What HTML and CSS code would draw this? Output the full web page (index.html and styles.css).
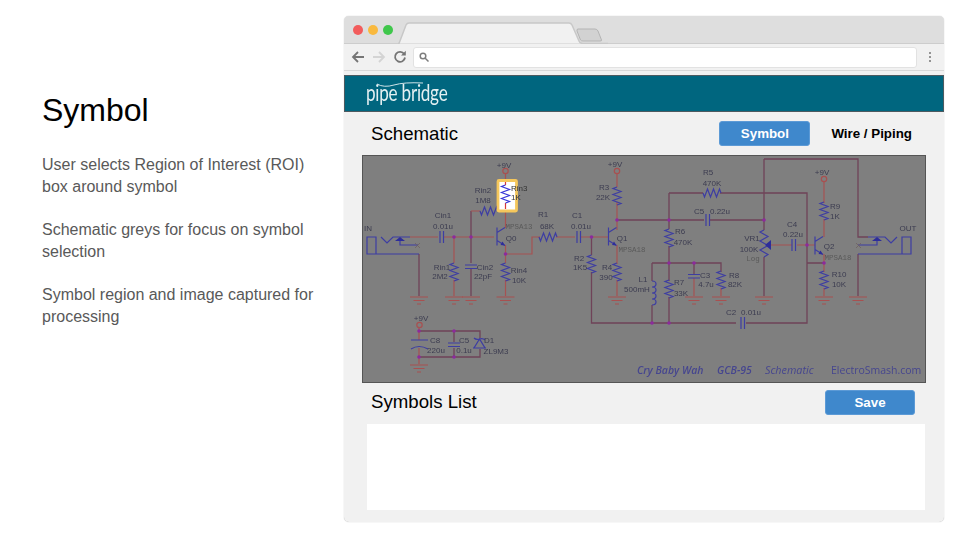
FILE: index.html
```html
<!DOCTYPE html>
<html lang="en">
<head>
<meta charset="utf-8">
<title>Symbol</title>
<link rel="stylesheet" href="styles.css">
</head>
<body>
<main class="slide">
  <section class="notes">
    <h1 class="notes-title">Symbol</h1>
    <p class="notes-text">User selects Region of Interest (ROI) box around symbol</p>
    <p class="notes-text">Schematic greys for focus on symbol selection</p>
    <p class="notes-text">Symbol region and image captured for processing</p>
  </section>

  <section class="window">
    <header class="titlebar">
      <span class="dot dot-red"></span>
      <span class="dot dot-yellow"></span>
      <span class="dot dot-green"></span>
      <svg class="tabs" viewBox="398 16 210 28" width="210" height="28">
        <path class="tab-shape" d="M398 43.5 H399 L406 25 Q407 23 409 23 H569 Q571 23 572 25 L579 41 Q580 43.5 583 43.5 H608"/>
        <path class="newtab-shape" d="M578 29 H595 Q597 29 598 31 L601.500 40 Q602 41 600 41 H583 Q581 41 580.500 40 L577 31 Q576.500 29 578 29 Z"/>
      </svg>
    </header>
    <nav class="toolbar">
      <svg class="tool-icon" viewBox="0 0 14 14" width="14" height="14"><path class="ic-dark" d="M13 7 H2 M7 2 L2 7 L7 12"/></svg>
      <svg class="tool-icon" viewBox="0 0 14 14" width="14" height="14"><path class="ic-light" d="M1 7 H12 M7 2 L12 7 L7 12"/></svg>
      <svg class="tool-icon" viewBox="0 0 14 14" width="14" height="14"><path class="ic-dark" d="M11.200 4 A5 5 0 1 0 12 7.500"/><path class="ic-fill" d="M8 5.500 H12.800 V0.800 Z"/></svg>
      <div class="address">
        <svg viewBox="0 0 10 10" width="10" height="10"><circle class="ic-search" cx="4" cy="4" r="2.800"/><path class="ic-search" d="M6 6 L9.500 9.500"/></svg>
      </div>
      <svg class="kebab" viewBox="0 0 4 12" width="4" height="12"><circle class="ic-fill" cx="2" cy="2" r="1"/><circle class="ic-fill" cx="2" cy="6" r="1"/><circle class="ic-fill" cx="2" cy="10" r="1"/></svg>
    </nav>
    <div class="brandbar">
      <div class="logo">
        <span class="logo-text">pipe bridge</span>
        <svg class="logo-swag" viewBox="0 0 48 8" width="48" height="8"><path d="M1 4 Q8 8 18 5 T47 3"/></svg>
      </div>
    </div>

    <div class="panel-head">
      <h2 class="panel-title">Schematic</h2>
      <div class="modes">
        <button class="btn btn-mode" type="button">Symbol</button>
        <span class="mode-link">Wire / Piping</span>
      </div>
    </div>

    <svg class="schematic" viewBox="362 155 564 228" width="564" height="228">
      <defs>
        <path id="rv" d="M0 0 l-4 1.500 l8 3 l-8 3 l8 3 l-8 3 l8 3 l-4 1.500"/>
        <path id="rh" d="M0 0 l1.500 4 l3 -8 l3 8 l3 -8 l3 8 l3 -8 l1.500 4"/>
        <g id="gnd">
          <path d="M-9 0 H9 M-5.500 3.500 H5.500 M-2 7 H2"/>
        </g>
        <g id="q">
          <path d="M0 -9 V9 M0 -4 L8 -9 M0 4 L8 9"/>
          <path class="solid" d="M8 9 L3.500 8.500 L5.500 5 Z"/>
        </g>
      </defs>

      <rect class="bg" x="362" y="155" width="564" height="228"/>

      <!-- dark long wires -->
      <path class="wd" d="M471 211 V263 M471 269 V296 M419 254 V296 M419 331 H480 V338 M419 357 H480 V349 M454 331 V342 M454 348 V357 M591.500 272 V323 H736 M591.500 237 V255 M652 263 H721 V272 M652 263 V281 M669 246 V281 M669 297 V323 M652 305 V323 M694 263 V274 M617 220 H704 M710 220 H764 M669 193 V229 M669 193 H703 M720 193 H807 V323 H746 M764 159 V230 M764 257 V296 M764 159 H858 V237 H868 M858 254 V296 M824 263 H807"/>
      <!-- red wires -->
      <path class="w" d="M505.500 174 V184 M505.500 205 V228 M505.500 245 V263 M505.500 280 V296 M505 254 H532 V237 H540 M556 237 H575 M581 237 H608 M410 237 H438 M444 237 H494 M454 237 V263 M454 280 V296 M471 211 H480 M617 174 V187 M617 202 V230 M617 245 V264 M617 280 V296 M694 278 V296 M721 288 V296 M824 182 V203 M824 219 V237 M824 254 V272 M824 288 V296 M419 328 V340 M419 348 V364 M771 245 H792 M797 245 H815"/>

      <!-- symbols -->
      <g class="b">
        <use href="#rv" x="505.500" y="263"/>
        <use href="#rv" x="454" y="263"/>
        <use href="#rv" x="617" y="187" />
        <use href="#rv" x="617" y="263"/>
        <use href="#rv" x="591.500" y="255"/>
        <use href="#rv" x="669" y="229"/>
        <use href="#rv" x="669" y="280"/>
        <use href="#rv" x="721" y="271"/>
        <use href="#rv" x="824" y="202"/>
        <use href="#rv" x="824" y="271"/>
        <path d="M764 230 l-4 2 l8 4.500 l-8 4.500 l8 4.500 l-8 4.500 l8 4.500 l-4 2.500"/>
        <use href="#rh" x="480" y="211"/>
        <use href="#rh" x="539" y="237"/>
        <use href="#rh" x="703" y="193"/>
        <use href="#q" x="497" y="236.500"/>
        <use href="#q" x="608.500" y="236.500"/>
        <use href="#q" x="815" y="245.500"/>
        <path d="M440 231 V243 M443.500 231 V243 M577 231 V243 M580.500 231 V243 M706 214 V226 M709.500 214 V226 M792 239 V251 M795.500 239 V251 M741 317 V329 M744.500 317 V329"/>
        <path d="M465 265 H477 M465 268.500 H477 M688 274.500 H700 M688 278 H700 M448 343 H460 M448 346.500 H460 M411 340 H428 M411 349 Q419 344 428 349"/>
        <path d="M652 281 a4 3 0 0 1 0 6 a4 3 0 0 1 0 6 a4 3 0 0 1 0 6 a4 3 0 0 1 0 6"/>
        <path d="M367 237 H376 V254 H367 Z M376 254 H419 M381 237 L387 243 L393 237 H410 M400 240 V245 H418"/>
        <path class="solid" d="M400 237 L405 241 H395 Z"/>
        <path d="M902 237 H911 V254 H902 Z M858 254 H911 M868 237 H885 L891 243 L897 237 M877 240 V245 H858"/>
        <path class="solid" d="M877 237 L882 241 H872 Z"/>
        <path class="solid" d="M771 240 V250 L765 245 Z"/>
        <path d="M473 348 H486 M479.500 339 L474 348 H485 Z M474 338 Q476 340 479.500 339 Q483 338 485 340"/>
      </g>

      <!-- grounds -->
      <g class="g">
        <use href="#gnd" x="419" y="297"/>
        <use href="#gnd" x="454" y="297"/>
        <use href="#gnd" x="471" y="297"/>
        <use href="#gnd" x="505.500" y="297"/>
        <use href="#gnd" x="617" y="297"/>
        <use href="#gnd" x="694" y="297"/>
        <use href="#gnd" x="721" y="297"/>
        <use href="#gnd" x="764" y="297"/>
        <use href="#gnd" x="824" y="297"/>
        <use href="#gnd" x="858" y="297"/>
        <use href="#gnd" x="419" y="365"/>
      </g>

      <!-- terminals -->
      <g class="term">
        <circle cx="505.500" cy="171" r="2.700"/>
        <circle cx="617" cy="171" r="2.700"/>
        <circle cx="824" cy="179" r="2.700"/>
        <circle cx="419.500" cy="325" r="2.700"/>
      </g>
      <path class="x" d="M415 243 L420 248 M420 243 L415 248 M856 243 L861 248 M861 243 L856 248"/>

      <!-- junctions -->
      <g class="n">
        <circle cx="454" cy="237" r="1.800"/><circle cx="471" cy="237" r="1.800"/>
        <circle cx="505.500" cy="254" r="1.800"/><circle cx="591.500" cy="237" r="1.800"/>
        <circle cx="617" cy="220" r="1.800"/><circle cx="669" cy="220" r="1.800"/>
        <circle cx="669" cy="263" r="1.800"/><circle cx="694" cy="263" r="1.800"/>
        <circle cx="652" cy="323" r="1.800"/><circle cx="669" cy="323" r="1.800"/>
        <circle cx="764" cy="220" r="1.800"/><circle cx="807" cy="245" r="1.800"/>
        <circle cx="824" cy="263" r="1.800"/>
        <circle cx="419" cy="331" r="1.800"/><circle cx="454" cy="331" r="1.800"/>
        <circle cx="419" cy="357" r="1.800"/><circle cx="454" cy="357" r="1.800"/>
      </g>

      <!-- labels -->
      <g class="t">
        <text x="504" y="168">+9V</text><text x="615" y="167">+9V</text><text x="822" y="175">+9V</text><text x="421" y="321">+9V</text>
        <text x="368" y="231">IN</text><text x="908" y="231">OUT</text>
        <text x="443" y="218">Cin1</text><text x="443" y="229">0.01u</text>
        <text x="483" y="193">Rin2</text><text x="483" y="203">1M8</text>
        <text x="543" y="217">R1</text><text x="547" y="229">68K</text>
        <text x="511" y="241">Q0</text>
        <text x="442" y="270">Rin1</text><text x="440" y="279">2M2</text>
        <text x="485" y="270">Cin2</text><text x="483" y="279">22pF</text>
        <text x="519" y="273">Rin4</text><text x="519" y="283">10K</text>
        <text x="435" y="343">C8</text><text x="436" y="353">220u</text>
        <text x="464" y="343">C5</text><text x="464" y="353">0.1u</text>
        <text x="489" y="343">D1</text><text x="496" y="354">ZL9M3</text>
        <text x="604" y="190">R3</text><text x="603" y="200">22K</text>
        <text x="577" y="218">C1</text><text x="581" y="229">0.01u</text>
        <text x="622" y="241">Q1</text>
        <text x="579" y="261">R2</text><text x="580" y="270">1K5</text>
        <text x="607" y="270">R4</text><text x="606" y="280">390</text>
        <text x="708" y="175">R5</text><text x="712" y="186">470K</text>
        <text x="699" y="214">C5</text><text x="720" y="214">0.22u</text>
        <text x="680" y="234">R6</text><text x="683" y="245">470K</text>
        <text x="643" y="282">L1</text><text x="637" y="292">500mH</text>
        <text x="679" y="285">R7</text><text x="681" y="296">33K</text>
        <text x="705" y="278">C3</text><text x="706" y="287">4.7u</text>
        <text x="734" y="278">R8</text><text x="735" y="287">82K</text>
        <text x="731" y="315">C2</text><text x="751" y="315">0.01u</text>
        <text x="752" y="241">VR1</text><text x="749" y="252">100K</text>
        <text x="792" y="227">C4</text><text x="793" y="237">0.22u</text>
        <text x="835" y="209">R9</text><text x="835" y="219">1K</text>
        <text x="829" y="249">Q2</text>
        <text x="839" y="277">R10</text><text x="839" y="287">10K</text>
      </g>
      <g class="tm">
        <text x="519" y="229">MPSA13</text>
        <text x="632" y="252">MPSA18</text>
        <text x="838" y="260">MPSA18</text>
        <text x="753" y="261">Log</text>
      </g>
      <g class="credit">
        <text class="credit-it" x="637" y="374">Cry Baby Wah</text>
        <text class="credit-it" x="717" y="374">GCB-95</text>
        <text class="credit-sc" x="765" y="374">Schematic</text>
        <text class="credit-url" x="831" y="374">ElectroSmash.com</text>
      </g>

      <!-- region of interest -->
      <rect class="roi" x="498" y="180.500" width="18.500" height="30.500" rx="1"/>
      <path class="roi-wire" d="M505.500 182 V185 M505.500 203 V209"/>
      <use class="roi-res" href="#rv" x="505.500" y="185"/>
      <g class="roi-t">
        <text x="511" y="191">Rin3</text>
        <text x="511" y="200">1K</text>
      </g>
    </svg>

    <div class="list-head">
      <h2 class="panel-title list-title">Symbols List</h2>
      <button class="btn btn-save" type="button">Save</button>
    </div>
    <div class="list-box"></div>
  </section>
</main>
</body>
</html>
```

FILE: styles.css
```css
* { box-sizing: border-box; }
html, body { margin: 0; padding: 0; background: #fff; }
body { font-family: "Liberation Sans", Arial, sans-serif; }

.slide { display: flex; width: 960px; height: 540px; overflow: hidden; }

.notes { width: 344px; flex: none; padding: 91px 0 0 42px; }
.notes-title { margin: 0 0 25px; font-size: 32px; line-height: 38px; font-weight: 400; color: #000; }
.notes-text { margin: 0 0 21px; width: 280px; font-size: 16px; line-height: 22px; color: #595959; }

.window { width: 600px; height: 506px; margin-top: 16px; flex: none; display: flex; flex-direction: column; background: #f1f1f1; border-radius: 5px; box-shadow: 0 0 1px #aaa; overflow: hidden; }

.titlebar { height: 28px; flex: none; display: flex; align-items: center; gap: 5px; padding-left: 9px; background: #dedede; border-bottom: 1px solid #cdcdcd; }
.dot { width: 10px; height: 10px; border-radius: 50%; }
.dot-red { background: #f25c5c; }
.dot-yellow { background: #f9b93e; }
.dot-green { background: #3fc74b; }
.tabs { align-self: flex-start; flex: none; margin-bottom: -1px; }
.tab-shape { fill: #f1f1f1; stroke: #c8c8c8; stroke-width: 1.500; }
.newtab-shape { fill: #d2d2d2; stroke: #b4b4b4; stroke-width: 1; }

.toolbar { height: 27px; flex: none; display: flex; align-items: center; gap: 7px; padding-left: 7px; border-bottom: 1px solid #d8d8d8; }
.tool-icon { flex: none; }
.ic-dark { fill: none; stroke: #757575; stroke-width: 1.800; }
.ic-light { fill: none; stroke: #d4d4d4; stroke-width: 1.800; }
.ic-fill { fill: #757575; }
.ic-search { fill: none; stroke: #7d7d7d; stroke-width: 1.500; }
.address { width: 504px; height: 21px; margin-left: -1px; flex: none; display: flex; align-items: center; padding-left: 5px; background: #fff; border: 1.500px solid #e2e2e2; border-radius: 3px; }
.kebab { flex: none; margin-left: 4px; }

.brandbar { height: 37px; margin-top: 4px; flex: none; display: flex; align-items: center; padding-left: 21px; background: #00667f; border: 1px solid #4d5a60; }
.logo { position: relative; width: 82px; height: 28px; top: -1px; }
.logo-text { display: inline-block; font-family: Lato, sans-serif; font-size: 22.500px; line-height: 28px; letter-spacing: -0.300px; color: #e4f0f2; white-space: nowrap; transform: scaleX(0.76); transform-origin: left center; }
.logo-swag { position: absolute; left: 10px; top: 1px; }
.logo-swag path { fill: none; stroke: #cfe3e8; stroke-width: 1; }

.panel-head { height: 43px; flex: none; display: flex; align-items: center; justify-content: space-between; padding: 0 32px 0 27px; }
.panel-title { margin: 0; font-size: 18.670px; font-weight: 400; color: #000; }
.list-title { padding-bottom: 2px; }
.modes { display: flex; align-items: center; gap: 21px; }
.mode-link { font-size: 13.330px; font-weight: 700; color: #000; }
.btn { height: 25px; padding: 0; border: 1px solid #5c9ad6; border-radius: 3px; background: #3f88cc; color: #fff; font: 700 13.330px "Liberation Sans", Arial, sans-serif; }
.btn-mode { width: 91px; }
.btn-save { width: 90px; }

.schematic { display: block; flex: none; margin-left: 18px; border: 0; outline: 1px solid #555; outline-offset: -1px; filter: blur(0.450px); }
.schematic .bg { fill: #7f7f7f; }
.wd { fill: none; stroke: #6f4358; stroke-width: 1.300; }
.w { fill: none; stroke: #a65252; stroke-width: 1.200; }
.b { fill: none; stroke: #3d3da3; stroke-width: 1.200; }
.b .solid, .solid { fill: #2d2d9a; stroke: none; }
.g { fill: none; stroke: #a85050; stroke-width: 1.200; }
.term { fill: none; stroke: #a85050; stroke-width: 1.200; }
.x { fill: none; stroke: #6f6060; stroke-width: 0.800; }
.n { fill: #8c2a9e; }
.t { font: 8px "Liberation Sans", Arial, sans-serif; fill: #3c3c50; text-anchor: middle; }
.tm { font: 7.500px "Liberation Mono", monospace; fill: #5a5a5a; text-anchor: middle; }
.credit { fill: #46468f; font: 600 10.500px "Open Sans", "Liberation Sans", sans-serif; }
.credit-it { font-style: italic; }
.credit-sc { font-style: italic; font-weight: 400; font-size: 10.800px; }
.credit-url { font-weight: 400; }
.roi { fill: #fff; stroke: #f5c75c; stroke-width: 2.800; }
.roi-wire { fill: none; stroke: #d83838; stroke-width: 1.200; }
.roi-res { fill: none; stroke: #3636d8; stroke-width: 1.200; }
.roi-t { font: 8px "Liberation Sans", Arial, sans-serif; fill: #333; }

.list-head { height: 41px; flex: none; display: flex; align-items: center; justify-content: space-between; padding: 0 29px 2px 27px; }
.list-box { height: 86px; flex: none; margin: 0 19px 0 23px; background: #fff; }
```
